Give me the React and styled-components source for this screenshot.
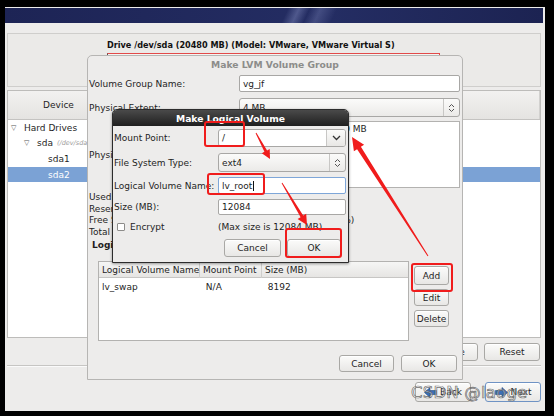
import React from 'react';
import styled, { createGlobalStyle, css } from 'styled-components';

const GlobalStyle = createGlobalStyle`
  html, body { margin: 0; padding: 0; background: #000; }
  body {
    font-family: "DejaVu Sans", "Noto Sans", sans-serif;
    font-size: 9px;
    color: #1e1e1e;
  }
  * { box-sizing: border-box; }
`;

const Frame = styled.div`
  position: relative;
  width: 554px;
  height: 416px;
  padding: 7px 9px 5px 5px;
  background: #000;
  overflow: hidden;
`;

const Screen = styled.div`
  height: 100%;
  display: flex;
  flex-direction: column;
  background: #edeceb;
`;

const Banner = styled.div`
  height: 15px;
  margin: 1px 2px 0 0;
  background:
    linear-gradient(115deg, transparent 52%, rgba(160, 170, 220, 0.35) 54%, transparent 56%,
      rgba(160, 170, 220, 0.25) 58%, transparent 61%),
    linear-gradient(90deg, #1d2455, #242d63 60%, #1c2352);
`;

const DrivePanel = styled.div`
  height: 54px;
  margin: 10px 4px 0 2px;
  padding: 6px 0 0 99px;
  border: 1px solid #cfcecc;
  background: #ebeae8;
`;

const DriveTitle = styled.div`
  font-weight: bold;
  font-size: 8.15px;
  line-height: 11px;
  color: #111;
`;

const DriveBar = styled.div`
  width: 333px;
  height: 30px;
  margin-top: 2px;
  border: 1px solid #e24a4a;
  border-left-color: #555;
  background: #f4f4f2;
`;

const DeviceTable = styled.div`
  height: 248px;
  margin: 3px 4px 0 2px;
  border: 1px solid #bdbcba;
  background: #fff;
`;

const HeaderRow = styled.div`
  height: 29px;
  display: flex;
  background: linear-gradient(#f2f1f0, #e4e3e1);
  border-bottom: 1px solid #c4c3c1;
`;

const HeaderCell = styled.div`
  width: ${p => p.$w || 'auto'};
  flex: ${p => (p.$w ? 'none' : 1)};
  display: flex;
  align-items: center;
  justify-content: center;
  font-size: 9px;
  border-right: 1px solid #d2d1cf;
`;

const TreeRow = styled.div`
  height: 15.6px;
  display: flex;
  align-items: center;
  padding-left: ${p => p.$indent}px;
  background: ${p => (p.$selected ? '#7ba2d5' : 'transparent')};
  color: ${p => (p.$selected ? '#fff' : '#1e1e1e')};
  white-space: nowrap;
`;

const Expander = styled.span`
  width: 13px;
  font-size: 7px;
  color: #555;
`;

const DevPath = styled.span`
  margin-left: 4px;
  font-size: 6.5px;
  font-style: italic;
  color: #9a9a9a;
`;

const ButtonRow = styled.div`
  display: flex;
  justify-content: flex-end;
  gap: ${p => p.$gap || 6}px;
  margin: ${p => p.$margin || '0'};
  padding: ${p => p.$pad || '0'};
`;

const Button = styled.div`
  width: ${p => p.$w || 56}px;
  height: ${p => p.$h || 18}px;
  display: flex;
  align-items: center;
  justify-content: center;
  gap: 3px;
  font-size: 9px;
  color: #1e1e1e;
  border: 1px solid ${p => (p.$focus ? '#6f93c4' : '#a9a8a5')};
  border-radius: 3px;
  background: linear-gradient(#fbfbfa, #e8e7e5);
  box-shadow: inset 0 1px 0 #fff;
`;

const Separator = styled.div`
  height: 2px;
  margin: 4px 4px 0 2px;
  border-top: 1px solid #c6c5c3;
  border-bottom: 1px solid #fafafa;
`;

const Dialog = styled.div`
  position: absolute;
  left: ${p => p.$x}px;
  top: ${p => p.$y}px;
  width: ${p => p.$w}px;
  height: ${p => p.$h}px;
  display: flex;
  flex-direction: column;
  background: #edeceb;
  border-radius: 5px 5px 0 0;
  ${p =>
    p.$active
      ? css`
          border: 1px solid #2c2c2c;
          box-shadow: 0 1px 3px rgba(0, 0, 0, 0.4);
        `
      : css`
          border: 1px solid #b6b5b3;
        `}
`;

const TitleBar = styled.div`
  height: ${p => p.$h || 16}px;
  flex: none;
  display: flex;
  align-items: center;
  justify-content: center;
  font-weight: bold;
  font-size: 9.2px;
  border-radius: 4px 4px 0 0;
  ${p =>
    p.$active
      ? css`
          color: #fff;
          background: linear-gradient(#4a4a4a, #1f1f1f);
        `
      : css`
          color: #8c8c8a;
        `}
`;

const FormRow = styled.div`
  display: grid;
  grid-template-columns: ${p => p.$label}px 1fr;
  align-items: center;
  height: ${p => p.$h}px;
  margin-top: ${p => p.$mt || 0}px;
  padding: 0 ${p => p.$pr || 2}px 0 1px;
  white-space: nowrap;
`;

const Entry = styled.div`
  height: 100%;
  display: flex;
  align-items: center;
  padding-left: 3px;
  background: #fff;
  border: 1px solid ${p => (p.$focus ? '#7ea6d8' : '#a8a7a5')};
  border-radius: 2px;
  overflow: hidden;
`;

const Combo = styled.div`
  height: 100%;
  display: flex;
  align-items: stretch;
  border: 1px solid #a8a7a5;
  border-radius: 3px;
  background: ${p => (p.$editable ? '#fff' : 'linear-gradient(#fbfbfa, #ebeae8)')};
`;

const ComboText = styled.div`
  flex: 1;
  display: flex;
  align-items: center;
  padding-left: 3px;
`;

const ComboButton = styled.div`
  width: ${p => p.$w || 16}px;
  display: flex;
  align-items: center;
  justify-content: center;
  border-left: 1px solid #c8c7c5;
  background: ${p => (p.$editable ? 'linear-gradient(#fbfbfa, #e8e7e5)' : 'transparent')};
  border-radius: 0 2px 2px 0;
`;

const Caret = styled.span`
  display: inline-block;
  width: 1px;
  height: 10px;
  margin-left: 1px;
  background: #111;
`;

const ListBox = styled.div`
  height: 100%;
  background: #fff;
  border: 1px solid #b3b2b0;
`;

const ListItem = styled.div`
  display: grid;
  grid-template-columns: 41px auto;
  height: 13px;
  align-items: center;
  padding: 1px 0 0 26px;
`;

const StatLine = styled.div`
  height: 11.6px;
  line-height: 11.6px;
  padding-left: 1px;
  display: grid;
  grid-template-columns: 150px 1fr;
  white-space: nowrap;
`;

const SectionTitle = styled.div`
  margin-top: 1px;
  padding-left: 4px;
  height: 12px;
  line-height: 12px;
  font-weight: bold;
`;

const TableArea = styled.div`
  display: flex;
  gap: 5px;
  margin-top: 10px;
  padding-left: 10px;
`;

const LvTable = styled.div`
  width: 311px;
  height: 80px;
  background: #fff;
  border: 1px solid #b3b2b0;
`;

const LvHead = styled.div`
  display: flex;
  height: 16px;
  background: linear-gradient(#f6f6f5, #e6e5e3);
  border-bottom: 1px solid #c7c6c4;
`;

const LvCell = styled.div`
  width: ${p => p.$w}px;
  flex: ${p => (p.$w ? 'none' : 1)};
  display: flex;
  align-items: center;
  padding-left: 3px;
  height: ${p => p.$h || 16}px;
  border-right: ${p => (p.$head ? '1px solid #cfcecc' : 'none')};
  white-space: nowrap;
`;

const LvRow = styled.div`
  display: flex;
  margin-top: 2px;
`;

const SideButtons = styled.div`
  display: flex;
  flex-direction: column;
  gap: 4px;
  padding-top: 5px;
`;

const Spacer = styled.div`
  flex: 1;
`;

const CheckRow = styled.div`
  display: grid;
  grid-template-columns: 104px 1fr;
  align-items: center;
  height: 12px;
  margin-top: 6px;
  padding-left: 1px;
  white-space: nowrap;
`;

const CheckLabel = styled.div`
  display: flex;
  align-items: center;
  gap: 5px;
  padding-left: 3px;
`;

const CheckBox = styled.span`
  width: 8px;
  height: 8px;
  border: 1px solid #8d8c8a;
  background: #fff;
  border-radius: 1px;
`;

const Watermark = styled.div`
  position: absolute;
  left: 411px;
  top: 383px;
  font-family: "DejaVu Sans", sans-serif;
  font-size: 16.5px;
  letter-spacing: 0.2px;
  color: rgba(255, 255, 255, 0.45);
  -webkit-text-stroke: 0.7px rgba(85, 85, 85, 0.85);
  white-space: nowrap;
  pointer-events: none;
`;

const Overlay = styled.svg`
  position: absolute;
  left: 0;
  top: 0;
  pointer-events: none;
`;

const UpDown = () => (
  <svg width="7" height="10" viewBox="0 0 7 10">
    <path d="M1 4 L3.5 1.5 L6 4 M1 6 L3.5 8.5 L6 6" fill="none" stroke="#555" strokeWidth="1" />
  </svg>
);

const Chevron = () => (
  <svg width="9" height="6" viewBox="0 0 9 6">
    <path d="M1 1 L4.5 4.5 L8 1" fill="none" stroke="#333" strokeWidth="1.3" />
  </svg>
);

const NavArrow = ({ dir }) => (
  <svg width="13" height="11" viewBox="0 0 13 11">
    <path
      d={dir === 'left' ? 'M0.5 5.5 L6 0.5 V3.5 H12.5 V7.5 H6 V10.5 Z' : 'M12.5 5.5 L7 0.5 V3.5 H0.5 V7.5 H7 V10.5 Z'}
      fill="#3a6fb8"
      stroke="#24487c"
      strokeWidth="0.6"
    />
  </svg>
);

function arrowPoints(x1, y1, x2, y2, w1, w2, L, H) {
  const dx = x2 - x1;
  const dy = y2 - y1;
  const len = Math.hypot(dx, dy);
  const ux = dx / len;
  const uy = dy / len;
  const nx = -uy;
  const ny = ux;
  const bx = x2 - ux * L;
  const by = y2 - uy * L;
  return [
    [x1 + (nx * w1) / 2, y1 + (ny * w1) / 2],
    [bx + (nx * w2) / 2, by + (ny * w2) / 2],
    [bx + nx * H, by + ny * H],
    [x2, y2],
    [bx - nx * H, by - ny * H],
    [bx - (nx * w2) / 2, by - (ny * w2) / 2],
    [x1 - (nx * w1) / 2, y1 - (ny * w1) / 2],
  ]
    .map(p => p.map(v => v.toFixed(1)).join(','))
    .join(' ');
}

const marks = [
  { x: 205, y: 122, w: 39, h: 24 },
  { x: 208, y: 174, w: 56, h: 20 },
  { x: 286, y: 229, w: 55, h: 28 },
  { x: 412, y: 264, w: 40, h: 27 },
];

const arrows = [
  [256, 133, 270, 159, 1, 3, 9, 4.5],
  [282, 183, 307, 225, 1, 3, 10, 5],
  [428, 256, 352, 137, 1, 4.5, 13, 6],
];

const Annotations = () => (
  <Overlay width="554" height="416" viewBox="0 0 554 416">
    {marks.map((m, i) => (
      <rect key={i} x={m.x} y={m.y} width={m.w} height={m.h} rx="2" fill="none" stroke="#f01c1c" strokeWidth="2" />
    ))}
    {arrows.map((a, i) => (
      <polygon key={i} points={arrowPoints(...a)} fill="#f01c1c" />
    ))}
  </Overlay>
);

const VolumeGroupDialog = () => (
  <Dialog $x={87} $y={55} $w={376} $h={325}>
    <TitleBar>Make LVM Volume Group</TitleBar>
    <FormRow $label={150} $h={17} $mt={3}>
      <span>Volume Group Name:</span>
      <Entry>vg_jf</Entry>
    </FormRow>
    <FormRow $label={150} $h={19} $mt={6}>
      <span>Physical Extent:</span>
      <Combo>
        <ComboText>4 MB</ComboText>
        <ComboButton>
          <UpDown />
        </ComboButton>
      </Combo>
    </FormRow>
    <FormRow $label={150} $h={67} $mt={4}>
      <span>Physical Volumes to Use:</span>
      <ListBox>
        <ListItem>
          <span>sda2</span>
          <span>12084.00 MB</span>
        </ListItem>
      </ListBox>
    </FormRow>
    <div style={{ marginTop: 4 }}>
      <StatLine>
        <span>Used Space:</span>
        <span>8192.00 MB (67.8 %)</span>
      </StatLine>
      <StatLine>
        <span>Reserved Space:</span>
        <span>0.00 MB (0.0 %)</span>
      </StatLine>
      <StatLine>
        <span>Free Space:</span>
        <span>&nbsp;&nbsp;&nbsp;&nbsp;&nbsp;&nbsp;&nbsp;3892.00 MB (32.2 %)</span>
      </StatLine>
      <StatLine>
        <span>Total Space:</span>
        <span>12084.00 MB</span>
      </StatLine>
    </div>
    <SectionTitle>Logical Volumes</SectionTitle>
    <TableArea>
      <LvTable>
        <LvHead>
          <LvCell $head $w={101}>Logical Volume Name</LvCell>
          <LvCell $head $w={62}>Mount Point</LvCell>
          <LvCell>Size (MB)</LvCell>
        </LvHead>
        <LvRow>
          <LvCell $w={101} $h={14}>lv_swap</LvCell>
          <LvCell $w={62} $h={14}>&nbsp;N/A</LvCell>
          <LvCell $h={14}>&nbsp;8192</LvCell>
        </LvRow>
      </LvTable>
      <SideButtons>
        <Button $w={35} $h={19}>Add</Button>
        <Button $w={35} $h={17}>Edit</Button>
        <Button $w={35} $h={17}>Delete</Button>
      </SideButtons>
    </TableArea>
    <Spacer />
    <ButtonRow $gap={7} $pad="0 5px 7px 0">
      <Button $w={55} $h={17}>Cancel</Button>
      <Button $w={56} $h={17}>OK</Button>
    </ButtonRow>
  </Dialog>
);

const LogicalVolumeDialog = () => (
  <Dialog $active $x={112} $y={109} $w={237} $h={154}>
    <TitleBar $active>Make Logical Volume</TitleBar>
    <FormRow $label={104} $h={18} $mt={3}>
      <span>Mount Point:</span>
      <Combo $editable>
        <ComboText>/</ComboText>
        <ComboButton $editable $w={19}>
          <Chevron />
        </ComboButton>
      </Combo>
    </FormRow>
    <FormRow $label={104} $h={19} $mt={6}>
      <span>File System Type:</span>
      <Combo>
        <ComboText>ext4</ComboText>
        <ComboButton $w={16}>
          <UpDown />
        </ComboButton>
      </Combo>
    </FormRow>
    <FormRow $label={104} $h={17} $mt={5}>
      <span>Logical Volume Name:</span>
      <Entry $focus>
        lv_root
        <Caret />
      </Entry>
    </FormRow>
    <FormRow $label={104} $h={16} $mt={5}>
      <span>Size (MB):</span>
      <Entry>12084</Entry>
    </FormRow>
    <CheckRow>
      <CheckLabel>
        <CheckBox />
        Encrypt
      </CheckLabel>
      <span>(Max size is 12084 MB)</span>
    </CheckRow>
    <ButtonRow $gap={6} $margin="6px 0 0" $pad="0 7px 0 0">
      <Button $w={57}>Cancel</Button>
      <Button $w={54}>OK</Button>
    </ButtonRow>
  </Dialog>
);

export default function App() {
  return (
    <>
      <GlobalStyle />
      <Frame>
        <Screen>
          <Banner />
          <DrivePanel>
            <DriveTitle>Drive /dev/sda (20480 MB) (Model: VMware, VMware Virtual S)</DriveTitle>
            <DriveBar />
          </DrivePanel>
          <DeviceTable>
            <HeaderRow>
              <HeaderCell $w="102px">Device</HeaderCell>
              <HeaderCell $w="70px" />
              <HeaderCell $w="70px" />
              <HeaderCell $w="50px" />
              <HeaderCell />
            </HeaderRow>
            <TreeRow $indent={3}>
              <Expander>▽</Expander>Hard Drives
            </TreeRow>
            <TreeRow $indent={16}>
              <Expander>▽</Expander>sda<DevPath>(/dev/sda)</DevPath>
            </TreeRow>
            <TreeRow $indent={40}>sda1</TreeRow>
            <TreeRow $indent={40} $selected>
              sda2
            </TreeRow>
          </DeviceTable>
          <ButtonRow $gap={6} $margin="5px 5px 0 0">
            <Button $w={56} />
            <Button $w={56} />
            <Button $w={56}>Delete</Button>
            <Button $w={56}>Reset</Button>
          </ButtonRow>
          <Separator />
          <ButtonRow $gap={14} $margin="15px 4px 0 0">
            <Button $w={56} $h={20}>
              <NavArrow dir="left" />
              Back
            </Button>
            <Button $w={56} $h={20} $focus>
              <NavArrow dir="right" />
              Next
            </Button>
          </ButtonRow>
        </Screen>
        <VolumeGroupDialog />
        <LogicalVolumeDialog />
        <Annotations />
        <Watermark>CSDN @laoge</Watermark>
      </Frame>
    </>
  );
}
